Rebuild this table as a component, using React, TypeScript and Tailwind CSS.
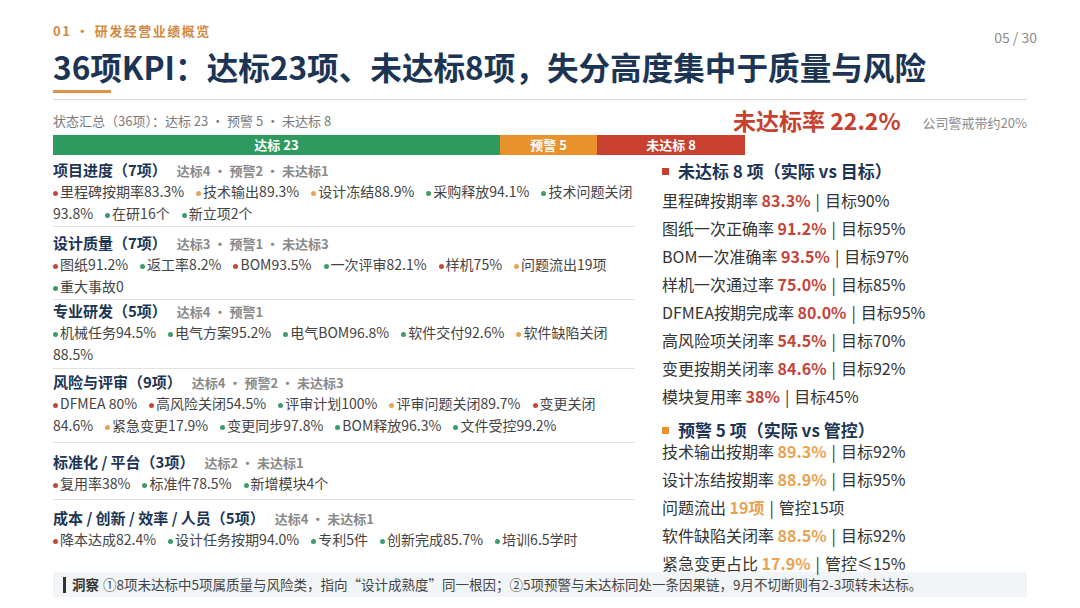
import React from 'react';

type Tone = 'r' | 'o' | 'g';

const dotColor: Record<Tone, string> = {
    r: 'bg-[#bf4a3c]',
    o: 'bg-[#e5a45a]',
    g: 'bg-[#3f9a6c]',
};

const sections: {
    title: string;
    sub: string;
    items: [Tone, string][];
    pad: string;
}[] = [
    {
        title: '项目进度（7项）',
        sub: '达标4 • 预警2 • 未达标1',
        pad: 'pt-[6px] pb-[2px] border-b',
        items: [
            ['r', '里程碑按期率83.3%'],
            ['o', '技术输出89.3%'],
            ['o', '设计冻结88.9%'],
            ['g', '采购释放94.1%'],
            ['g', '技术问题关闭93.8%'],
            ['g', '在研16个'],
            ['g', '新立项2个'],
        ],
    },
    {
        title: '设计质量（7项）',
        sub: '达标3 • 预警1 • 未达标3',
        pad: 'pt-[7px] pb-[2px] border-b',
        items: [
            ['r', '图纸91.2%'],
            ['g', '返工率8.2%'],
            ['r', 'BOM93.5%'],
            ['g', '一次评审82.1%'],
            ['r', '样机75%'],
            ['o', '问题流出19项'],
            ['g', '重大事故0'],
        ],
    },
    {
        title: '专业研发（5项）',
        sub: '达标4 • 预警1',
        pad: 'pt-[2px] pb-[3px] border-b',
        items: [
            ['g', '机械任务94.5%'],
            ['g', '电气方案95.2%'],
            ['g', '电气BOM96.8%'],
            ['g', '软件交付92.6%'],
            ['o', '软件缺陷关闭88.5%'],
        ],
    },
    {
        title: '风险与评审（9项）',
        sub: '达标4 • 预警2 • 未达标3',
        pad: 'pt-[4px] pb-[6px] border-b',
        items: [
            ['r', 'DFMEA 80%'],
            ['r', '高风险关闭54.5%'],
            ['g', '评审计划100%'],
            ['o', '评审问题关闭89.7%'],
            ['r', '变更关闭84.6%'],
            ['o', '紧急变更17.9%'],
            ['g', '变更同步97.8%'],
            ['g', 'BOM释放96.3%'],
            ['g', '文件受控99.2%'],
        ],
    },
    {
        title: '标准化 / 平台（3项）',
        sub: '达标2 • 未达标1',
        pad: 'pt-[10px] pb-[5px] border-b',
        items: [
            ['r', '复用率38%'],
            ['g', '标准件78.5%'],
            ['g', '新增模块4个'],
        ],
    },
    {
        title: '成本 / 创新 / 效率 / 人员（5项）',
        sub: '达标4 • 未达标1',
        pad: 'pt-[9px]',
        items: [
            ['r', '降本达成82.4%'],
            ['g', '设计任务按期94.0%'],
            ['g', '专利5件'],
            ['g', '创新完成85.7%'],
            ['g', '培训6.5学时'],
        ],
    },
];

const missed: [string, string, string][] = [
    ['里程碑按期率', '83.3%', '目标90%'],
    ['图纸一次正确率', '91.2%', '目标95%'],
    ['BOM一次准确率', '93.5%', '目标97%'],
    ['样机一次通过率', '75.0%', '目标85%'],
    ['DFMEA按期完成率', '80.0%', '目标95%'],
    ['高风险项关闭率', '54.5%', '目标70%'],
    ['变更按期关闭率', '84.6%', '目标92%'],
    ['模块复用率', '38%', '目标45%'],
];

const warned: [string, string, string][] = [
    ['技术输出按期率', '89.3%', '目标92%'],
    ['设计冻结按期率', '88.9%', '目标95%'],
    ['问题流出', '19项', '管控15项'],
    ['软件缺陷关闭率', '88.5%', '目标92%'],
    ['紧急变更占比', '17.9%', '管控≤15%'],
];

function KpiLine({ row, valueClass }: { row: [string, string, string]; valueClass: string }) {
    return (
        <div className="text-[16px] leading-[28px] text-[#333] whitespace-nowrap">
            {row[0]} <span className={`font-bold ${valueClass}`}>{row[1]}</span>
            <span className="mx-[5px]">|</span>
            {row[2]}
        </div>
    );
}

export default function App() {
    return (
        <div
            className="w-[1080px] h-[608px] bg-white px-[53px] overflow-hidden"
            style={{ fontFamily: '"Noto Sans CJK SC", "Noto Sans", sans-serif' }}
        >
            {/* Header */}
            <div className="flex justify-between items-end pt-[22px]">
                <div className="text-[13px] leading-[18px] font-bold tracking-[1.5px] text-[#d08a45]">
                    01 • 研发经营业绩概览
                </div>
                <div className="text-[14px] leading-[18px] text-[#8c8c8c] -mr-[10px] translate-y-[6px]">05 / 30</div>
            </div>
            <h1 className="mt-[5px] text-[31.6px] leading-[42px] font-bold text-[#1c3554] whitespace-nowrap">
                36项KPI：达标23项、未达标8项，失分高度集中于质量与风险
            </h1>
            <div className="mt-[3px] w-[58px] h-[3px] bg-[#d99447]" />
            <div className="mt-[6px] h-px bg-[#dcdcdc]" />

            {/* Status summary */}
            <div className="flex justify-between items-end h-[35px]">
                <div className="text-[13px] leading-[18px] text-[#7a7a7a] pb-[5px]">
                    状态汇总（36项）：达标 23 · 预警 5 · 未达标 8
                </div>
                <div className="flex items-end">
                    <span className="text-[23px] leading-[29px] font-bold text-[#c8402f]">未达标率 22.2%</span>
                    <span className="ml-[22px] mb-[3px] text-[13px] leading-[18px] text-[#8a8a8a]">公司警戒带约20%</span>
                </div>
            </div>
            <div className="flex w-[692px] h-[20px] text-[13px] leading-[20px] font-bold text-white">
                <div className="w-[447px] bg-[#2f9a5f] text-center">达标 23</div>
                <div className="w-[97px] bg-[#e8912d] text-center">预警 5</div>
                <div className="flex-1 bg-[#c8402f] text-center">未达标 8</div>
            </div>

            {/* Body */}
            <div className="flex h-[417px]">
                <div className="w-[582px]">
                    {sections.map((s) => (
                        <div key={s.title} className={`${s.pad} border-[#e2e2e2]`}>
                            <div className="flex items-baseline leading-[18px] whitespace-nowrap">
                                <span className="text-[15px] font-bold text-[#1c3554]">{s.title}</span>
                                <span className="ml-[10px] text-[13px] font-bold text-[#8a8a8a]">{s.sub}</span>
                            </div>
                            <div className="text-[14px] leading-[22px] text-[#444]">
                                {s.items.map(([tone, label]) => (
                                    <span key={label} className="mr-[12px]">
                                        <span className="whitespace-nowrap">
                                            <span className={`inline-block w-[5px] h-[5px] rounded-full align-middle mr-[2px] ${dotColor[tone]}`} />
                                            {label.slice(0, 1)}
                                        </span>
                                        {label.slice(1)}
                                    </span>
                                ))}
                            </div>
                        </div>
                    ))}
                </div>

                <div className="relative z-10 ml-[27px] flex-1 pt-[5px]">
                    <div className="flex items-center text-[17px] leading-[22px] font-bold text-[#1c3554] whitespace-nowrap">
                        <span className="w-[7px] h-[7px] bg-[#c8402f] mr-[9px]" />
                        未达标 8 项（实际 vs 目标）
                    </div>
                    <div className="mt-[4px]">
                        {missed.map((r) => (
                            <KpiLine key={r[0]} row={r} valueClass="text-[#c4453a]" />
                        ))}
                    </div>
                    <div className="mt-[12px] flex items-center text-[17px] leading-[16px] font-bold text-[#1c3554] whitespace-nowrap">
                        <span className="w-[7px] h-[7px] bg-[#e8912d] mr-[9px]" />
                        预警 5 项（实际 vs 管控）
                    </div>
                    <div className="-mt-[1px]">
                        {warned.map((r) => (
                            <KpiLine key={r[0]} row={r} valueClass="text-[#e9a24f]" />
                        ))}
                    </div>
                </div>
            </div>

            {/* Insight */}
            <div className="flex items-center h-[25px] bg-[#f2f5f7] pl-[10px] text-[13.5px] text-[#444] whitespace-nowrap">
                <span className="w-[3px] h-[16px] bg-[#333] mr-[6px]" />
                <span className="font-bold text-[#333] mr-[4px]">洞察</span>
                ①8项未达标中5项属质量与风险类，指向“设计成熟度”同一根因；②5项预警与未达标同处一条因果链，9月不切断则有2-3项转未达标。
            </div>
        </div>
    );
}
